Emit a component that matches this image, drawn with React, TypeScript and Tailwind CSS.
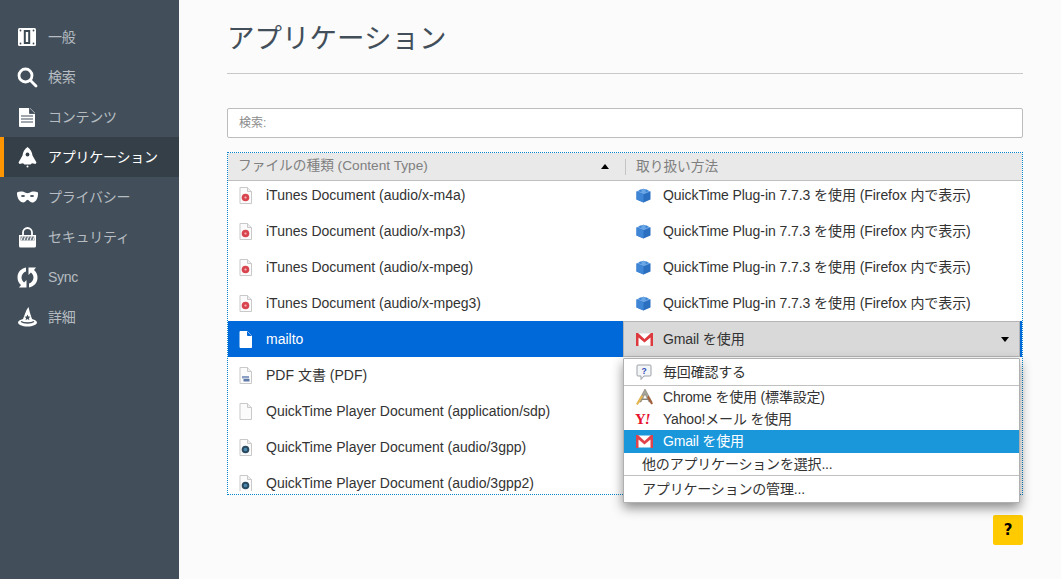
const font = { fontFamily: '"Liberation Sans", "Noto Sans CJK JP", sans-serif' }

function GeneralIcon() {
  return (
    <svg width="20" height="20" viewBox="0 0 20 20">
      <rect x="1" y="1" width="18" height="18" rx="1.500" fill="#fff" />
      <rect x="6.800" y="3" width="6.400" height="14" fill="#3d4953" />
      <rect x="8.800" y="5" width="2.400" height="10" fill="#fff" />
      <circle cx="3.500" cy="3.500" r="0.900" fill="#3d4953" />
      <circle cx="16.500" cy="3.500" r="0.900" fill="#3d4953" />
      <circle cx="3.500" cy="16.500" r="0.900" fill="#3d4953" />
      <circle cx="16.500" cy="16.500" r="0.900" fill="#3d4953" />
    </svg>
  )
}

function SearchIcon() {
  return (
    <svg width="21" height="21" viewBox="0 0 21 21" fill="none" stroke="#fff" strokeWidth="2.800" strokeLinecap="round">
      <circle cx="8.500" cy="8.500" r="6.500" />
      <path d="M13.500 13.500 19 19" />
    </svg>
  )
}

function ContentIcon() {
  return (
    <svg width="18" height="20" viewBox="0 0 18 20">
      <path d="M1 1h11l5 5v13a1 1 0 0 1-1 1H2a1 1 0 0 1-1-1z" fill="#fff" />
      <path d="M11.500 1v5.500H17" fill="#424f5a" stroke="#424f5a" strokeWidth="0.800" />
      <path d="M3 9h12M3 12h12M3 15h12" stroke="#424f5a" strokeWidth="1.200" />
    </svg>
  )
}

function RocketIcon() {
  return (
    <svg width="19" height="21" viewBox="0 0 19 21">
      <path d="M9.500 0c3 2 4.600 5 5 8.500l4 7-1 1.500-3.500-.8-1.500 1.300h-6L5 16.200 1.500 17l-1-1.500 4-7C4.900 5 6.500 2 9.500 0z" fill="#fff" />
      <circle cx="9.500" cy="7.500" r="1.900" fill="#353f48" />
      <circle cx="9.500" cy="19.500" r="1" fill="#fff" />
    </svg>
  )
}

function MaskIcon() {
  return (
    <svg width="21" height="12" viewBox="0 0 21 12">
      <path d="M0 1.500c3-1.500 6.500-1 8.500.3 1 .6 3 .6 4 0 2-1.300 5.500-1.800 8.500-.3 .3 4.500-1.500 10-6 10-2 0-3-2.800-4.500-2.800S8.500 11.500 6.500 11.500C2 11.500 -.3 6 0 1.500z" fill="#fff" />
      <ellipse cx="6" cy="5" rx="2" ry="1.100" fill="#424f5a" />
      <ellipse cx="15" cy="5" rx="2" ry="1.100" fill="#424f5a" />
    </svg>
  )
}

function LockIcon() {
  return (
    <svg width="19" height="21" viewBox="0 0 19 21">
      <path d="M5 9V5.500a4.500 4.500 0 0 1 9 0V9" fill="none" stroke="#fff" strokeWidth="1.800" />
      <path d="M1 8h17v11a1.500 1.500 0 0 1-1.500 1.500h-14A1.500 1.500 0 0 1 1 19z" fill="#fff" />
      <path d="M2.500 9.500h14v4h-14z" fill="#6b7680" />
      <path d="M3 13.500 4.500 9.500M6 13.500 7.500 9.500M9 13.500l1.500-4M12 13.500l1.500-4M15 13.500l1.500-4" stroke="#fff" strokeWidth="1" />
    </svg>
  )
}

function SyncIcon() {
  return (
    <svg width="21" height="21" viewBox="0 0 21 21">
      <path d="M9 .5C4 1.300.5 5.300.5 10.500c0 3 1.300 5.700 3.500 7.500L2 20.500h7.500V13l-2.400 2.500C5.600 14.200 4.500 12.500 4.500 10.500c0-3 2-5.300 4.500-6z" fill="#fff" />
      <path d="M12 20.500c5-.8 8.500-4.800 8.500-10 0-3-1.300-5.700-3.500-7.500l2-2.500h-7.500V8l2.400-2.500c1.500 1.300 2.600 3 2.600 5 0 3-2 5.300-4.500 6z" fill="#fff" />
    </svg>
  )
}

function HatIcon() {
  return (
    <svg width="21" height="20" viewBox="0 0 21 20">
      <path d="M11.500 0 9.500 3 6 12c-3 .8-5 2-5 3.500C1 17.800 5.300 19.500 10.500 19.500S20 17.800 20 15.500c0-1.500-2-2.700-5-3.500l-2-6z" fill="#fff" />
      <path d="M4 14.500c3 2 10 2 13 0" fill="none" stroke="#424f5a" strokeWidth="1.300" />
      <path d="m10.500 7.500.9 2 2.100.2-1.600 1.400.5 2.100-1.900-1.100-1.900 1.100.5-2.100-1.600-1.400 2.100-.2z" fill="#424f5a" />
    </svg>
  )
}

function NavItem({ icon, label, active }: { icon: React.ReactNode; label: string; active?: boolean }) {
  return (
    <div
      className={
        active
          ? 'flex h-10 items-center border-l-4 border-[#ff9500] bg-[#353f48] text-white'
          : 'flex h-10 items-center border-l-4 border-transparent text-[#b6bcc1]'
      }
    >
      <div className="flex w-[44px] justify-center pl-[2px]">{icon}</div>
      <span className="text-[14px] tracking-[-0.25px]">{label}</span>
    </div>
  )
}

type DocKind = 'itunes' | 'pdf' | 'blank' | 'qt' | 'white'

function DocIcon({ kind }: { kind: DocKind }) {
  const white = kind === 'white'
  return (
    <svg width="13" height="17" viewBox="0 0 13 17">
      <path d="M1 .5h7.500l4 4v12H1z" fill={white ? '#fff' : '#fbfbfb'} stroke={white ? '#fff' : '#c9c9c9'} />
      <path d="M8.500.5v4h4" fill={white ? '#0069d9' : '#eee'} stroke={white ? '#0069d9' : '#c9c9c9'} />
      {kind === 'itunes' && (
        <>
          <circle cx="6.500" cy="10.500" r="3.800" fill="#d9454e" />
          <circle cx="6.500" cy="10.500" r="1.100" fill="#f4b8bc" />
        </>
      )}
      {kind === 'pdf' && (
        <>
          <rect x="3" y="9" width="7" height="2.500" fill="#8aa0c4" />
          <rect x="4.500" y="12" width="6" height="2.500" fill="#5f79a8" />
        </>
      )}
      {kind === 'qt' && (
        <>
          <circle cx="6.500" cy="10.500" r="3.800" fill="#2a4a60" />
          <circle cx="6.500" cy="10.500" r="1.800" fill="#4a8ab0" />
        </>
      )}
    </svg>
  )
}

function BlockIcon() {
  return (
    <svg width="15" height="15" viewBox="0 0 15 15">
      <path d="M7.500.8 14.500 3.500v8L7.500 14.500.5 11.500v-8z" fill="#2a6fc0" />
      <path d="M7.500.8 14.500 3.500 7.500 6.300.5 3.500z" fill="#6aa5e6" />
      <path d="M.5 3.500 7.500 6.300v8.200L.5 11.500z" fill="#3f86d6" />
      <circle cx="4.500" cy="2.800" r="1.200" fill="#3f86d6" />
      <circle cx="10.500" cy="2.800" r="1.200" fill="#3f86d6" />
    </svg>
  )
}

function GmailIcon({ selected }: { selected?: boolean }) {
  return (
    <svg width="17" height="13" viewBox="0 0 17 13">
      <rect x="0.500" y="0.500" width="16" height="12" fill="#fff" />
      <path d="M0 0h2l6.500 6L15 0h2v13h-2.500V4.500L8.500 9.500 2.500 4.500V13H0z" fill={selected ? '#e0434b' : '#dc3a3f'} />
    </svg>
  )
}

function AskIcon() {
  return (
    <svg width="16" height="17" viewBox="0 0 16 17">
      <path d="M2 1h12a1 1 0 0 1 1 1v9a1 1 0 0 1-1 1H8l-3 3.500V12H2a1 1 0 0 1-1-1V2a1 1 0 0 1 1-1z" fill="#f4f5f7" stroke="#9ba1a8" />
      <text x="8" y="9.500" textAnchor="middle" fontSize="8.500" fill="#3248b8" fontWeight="700">?</text>
    </svg>
  )
}

function ChromeAppIcon() {
  return (
    <svg width="19" height="18" viewBox="0 0 19 18">
      <path d="M10 1 3 14h3l4-8 4 8h3z" fill="#a8a498" stroke="#6f6a5f" strokeWidth="0.500" />
      <path d="M6 10.500h8V12H5z" fill="#8a8578" />
      <path d="M6.500 7 1 16l1.800 1L8 8.500z" fill="#e8b64c" />
      <path d="M13.500 7.500 18 15.500 16.200 16.500l-4-7z" fill="#a5603a" />
    </svg>
  )
}

function YahooIcon() {
  return (
    <span className="w-[18px] text-[15px] leading-none font-bold tracking-[-1px] text-[#e8112d]" style={{ fontFamily: '"Liberation Serif", serif' }}>
      Y<i>!</i>
    </span>
  )
}

const rows: { kind: DocKind; name: string }[] = [
  { kind: 'itunes', name: 'iTunes Document (audio/x-m4a)' },
  { kind: 'itunes', name: 'iTunes Document (audio/x-mp3)' },
  { kind: 'itunes', name: 'iTunes Document (audio/x-mpeg)' },
  { kind: 'itunes', name: 'iTunes Document (audio/x-mpeg3)' },
  { kind: 'white', name: 'mailto' },
  { kind: 'pdf', name: 'PDF 文書 (PDF)' },
  { kind: 'blank', name: 'QuickTime Player Document (application/sdp)' },
  { kind: 'qt', name: 'QuickTime Player Document (audio/3gpp)' },
  { kind: 'qt', name: 'QuickTime Player Document (audio/3gpp2)' },
]

function Row({ kind, name }: { kind: DocKind; name: string }) {
  const selected = kind === 'white'
  return (
    <div className={selected ? 'flex h-9 items-center bg-[#0069d9] text-white' : 'flex h-9 items-center text-[#333]'}>
      <div className="flex w-[395px] items-center pl-[11px]">
        <div className="flex w-[27px]">
          <DocIcon kind={kind} />
        </div>
        <span>{name}</span>
      </div>
      {selected ? (
        <div className="flex h-9 w-[397px] items-center border border-[#b5b5b5] bg-[#d9d9d9] pr-[10px] pl-[12px] text-[#333]">
          <div className="flex w-[27px]">
            <GmailIcon />
          </div>
          <span className="flex-1 tracking-[-0.1px]">Gmail を使用</span>
          <span className="h-0 w-0 border-x-[4.500px] border-t-[5px] border-x-transparent border-t-black" />
        </div>
      ) : (
        kind === 'itunes' && (
          <div className="flex items-center pl-[13px]">
            <div className="flex w-[27px]">
              <BlockIcon />
            </div>
            <span className="tracking-[-0.07px]">QuickTime Plug-in 7.7.3 を使用 (Firefox 内で表示)</span>
          </div>
        )
      )}
    </div>
  )
}

function MenuItem({ icon, label, active, h }: { icon?: React.ReactNode; label: string; active?: boolean; h: string }) {
  return (
    <div className={`flex items-center tracking-[-0.18px] ${h} ${active ? 'bg-[#1a96db] text-white' : 'text-[#333]'}`}>
      {icon ? (
        <>
          <div className="flex w-[39px] justify-center pl-[1px]">{icon}</div>
          <span>{label}</span>
        </>
      ) : (
        <span className="pl-[18px]">{label}</span>
      )}
    </div>
  )
}

export default function App() {
  return (
    <div className="flex h-[579px] w-full overflow-hidden bg-[#fbfbfb] text-[14px]" style={font}>
      <aside className="w-[179px] shrink-0 bg-[#424f5a] pt-[17px]">
        <NavItem icon={<GeneralIcon />} label="一般" />
        <NavItem icon={<SearchIcon />} label="検索" />
        <NavItem icon={<ContentIcon />} label="コンテンツ" />
        <NavItem icon={<RocketIcon />} label="アプリケーション" active />
        <NavItem icon={<MaskIcon />} label="プライバシー" />
        <NavItem icon={<LockIcon />} label="セキュリティ" />
        <NavItem icon={<SyncIcon />} label="Sync" />
        <NavItem icon={<HatIcon />} label="詳細" />
      </aside>

      <main className="ml-[48px] w-[796px] shrink-0">
        <h1 className="flex h-[74px] items-center border-b border-[#c8c8c8] pt-[4px] text-[27.500px] font-normal text-[#424f5a]">
          アプリケーション
        </h1>
        <div className="mt-[34px] flex h-[30px] items-center rounded-[2px] border border-[#bdbdbd] bg-white pl-[11px] text-[12px] text-[#8c8c8c]">
          検索:
        </div>

        <div className="relative mt-[14px] h-[343px] border border-dotted border-[#0a84c8] bg-white">
          <div className="relative z-10 flex h-[28px] items-center border-b border-[#c0c0c0] bg-[#e9e9e9] text-[13.700px] text-[#808080]">
            <div className="flex w-[397px] items-center pr-[16px] pl-[10px]">
              <span className="flex-1">ファイルの種類 (Content Type)</span>
              <span className="h-0 w-0 border-x-[4.500px] border-b-[5px] border-x-transparent border-b-black" />
            </div>
            <div className="h-[16px] border-l border-[#c4c4c4] pl-[10px] leading-[16px]">取り扱い方法</div>
          </div>
          <div className="-mt-[4px] h-[314px] overflow-hidden">
            {rows.map((r) => (
              <Row key={r.name} kind={r.kind} name={r.name} />
            ))}
          </div>

          <div className="absolute top-[205px] left-[395px] z-20 w-[397px] rounded-[1px] border border-[#b0b0b0] bg-white shadow-[0_5px_12px_rgba(0,0,0,0.45)]">
            <MenuItem icon={<AskIcon />} label="毎回確認する" h="h-[26px]" />
            <div className="border-t border-[#c0c0c0]" />
            <MenuItem icon={<ChromeAppIcon />} label="Chrome を使用 (標準設定)" h="h-[22px]" />
            <MenuItem icon={<YahooIcon />} label="Yahoo!メール を使用" h="h-[22px]" />
            <MenuItem icon={<GmailIcon selected />} label="Gmail を使用" active h="h-[23px]" />
            <MenuItem label="他のアプリケーションを選択..." h="h-[22px]" />
            <div className="border-t border-[#c0c0c0]" />
            <MenuItem label="アプリケーションの管理..." h="h-[26px]" />
          </div>
        </div>

        <div className="mt-[20px] flex justify-end">
          <div className="flex h-[30px] w-[30px] items-center justify-center rounded-[2px] bg-[#ffcb00] text-[15px] font-bold text-black" style={{ fontFamily: '"DejaVu Sans", sans-serif' }}>
            ?
          </div>
        </div>
      </main>
    </div>
  )
}
